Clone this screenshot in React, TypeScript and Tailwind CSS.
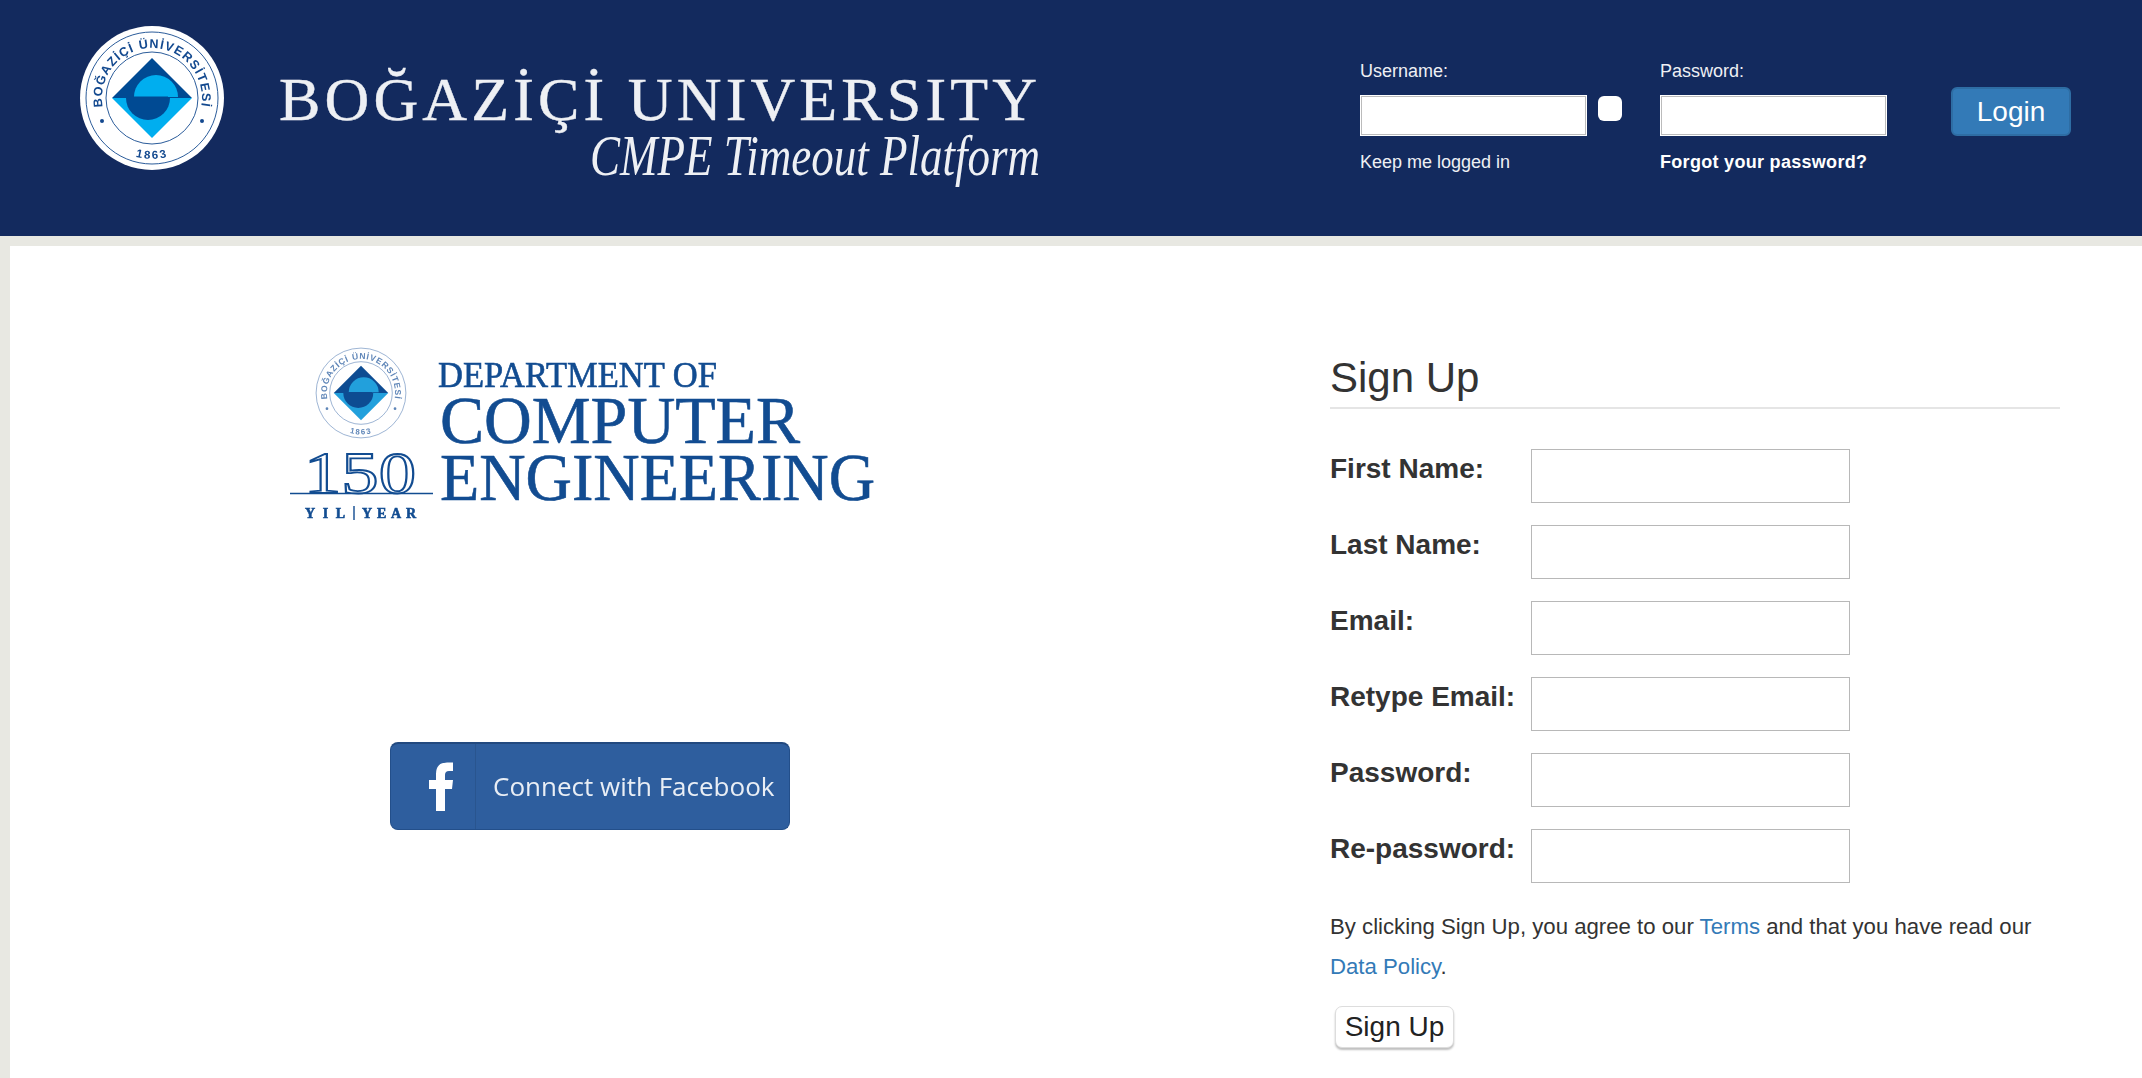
import React from 'react';

const SANS = 'font-["Liberation_Sans",Arial,sans-serif]';

const Seal: React.FC<{ id: string; size: number; ink: string; dark: string; light: string }> = ({ id, size, ink, dark, light }) => (
    <svg width={size} height={size} viewBox="-72 -72 144 144" className="shrink-0 blur-[0.4px]">
        <circle r="72" fill="#fff" />
        <circle r="66" fill="none" stroke={ink} strokeWidth="0.9" />
        <circle r="46" fill="none" stroke={ink} strokeWidth="0.9" />
        <path id={`${id}-top`} d="M -48.9 10.4 A 50 50 0 1 1 48.9 10.4" fill="none" />
        <path id={`${id}-bottom`} d="M -61 0 A 61 61 0 0 0 61 0" fill="none" />
        <text fontFamily="'Liberation Sans', sans-serif" fontWeight="700" fontSize="12.5" fill={ink} letterSpacing="1.1">
            <textPath href={`#${id}-top`} startOffset="50%" textAnchor="middle">BOĞAZİÇİ ÜNİVERSİTESİ</textPath>
        </text>
        <text fontFamily="'Liberation Sans', sans-serif" fontWeight="700" fontSize="11.5" fill={ink} letterSpacing="2">
            <textPath href={`#${id}-bottom`} startOffset="50%" textAnchor="middle">1863</textPath>
        </text>
        <circle cx="-50" cy="23" r="2" fill={ink} />
        <circle cx="50" cy="23" r="2" fill={ink} />
        <path d="M -40 0 L 0 -40 L 40 0 Z" fill={dark} />
        <path d="M -40 0 L 0 40 L 40 0 Z" fill={light} />
        <path d="M -18 -1 A 22 22 0 0 1 26 -1 Z" fill={light} />
        <path d="M -26 0 A 22 22 0 0 0 18 0 Z" fill={dark} />
        <path d="M -18 -1.5 H 16 V 0 H -18 Z" fill={dark} />
    </svg>
);

const HeaderLogo = () => (
    <div className="flex items-start shrink-0 w-[960px] mt-[26px] h-[170px]">
        <Seal id="head" size={144} ink="#13498f" dark="#004a93" light="#00aeef" />
        <svg width="816" height="170" viewBox="0 0 816 170" className="blur-[0.3px]">
            <text x="55" y="94" fontFamily="'Liberation Serif', serif" fontSize="62" fill="#eef0f4" stroke="#eef0f4" strokeWidth="0.4" textLength="758" lengthAdjust="spacing">BOĞAZİÇİ UNIVERSITY</text>
            <text x="366" y="149" fontFamily="'Liberation Serif', serif" fontStyle="italic" fontSize="56" fill="#eef0f4" textLength="450" lengthAdjust="spacingAndGlyphs">CMPE Timeout Platform</text>
        </svg>
    </div>
);

const DepartmentLogo = () => (
    <div className="relative w-[590px] h-[174px] blur-[0.4px]">
        <div className="absolute left-[22px] -top-[2px]">
            <Seal id="dept" size={98} ink="#5f86b8" dark="#0d4c92" light="#22a0dc" />
        </div>
        <svg width="590" height="174" viewBox="0 0 590 174" className="absolute inset-0">
            <g fontFamily="'Liberation Serif', serif" fill="#124c91" stroke="#124c91" strokeWidth="0.6">
                <text x="148" y="41" fontSize="35" textLength="279" lengthAdjust="spacingAndGlyphs">DEPARTMENT OF</text>
                <text x="150" y="97" fontSize="68" textLength="360" lengthAdjust="spacingAndGlyphs">COMPUTER</text>
                <text x="150" y="154" fontSize="68" textLength="435" lengthAdjust="spacingAndGlyphs">ENGINEERING</text>
                <text x="14" y="147" fontSize="60" fill="#fff" strokeWidth="1.8" textLength="112" lengthAdjust="spacingAndGlyphs">150</text>
                <text x="15" y="172" fontSize="14" fontWeight="700" textLength="40" lengthAdjust="spacing">YIL</text>
                <text x="72" y="172" fontSize="14" fontWeight="700" textLength="54" lengthAdjust="spacing">YEAR</text>
            </g>
            <path d="M0 147.5H143M64 160V174" stroke="#124c91" strokeWidth="1.4" fill="none" />
        </svg>
    </div>
);

const FacebookButton = () => (
    <a className="flex items-stretch w-[400px] h-[88px] ml-[380px] mt-[222px] rounded-[8px] border border-[#234f8a] border-t-2 border-t-[#22497f] bg-[#2e5e9e] blur-[0.3px]">
        <span className="flex items-center justify-center w-[85px] border-r border-[#29558f]">
            <svg width="24" height="49" viewBox="0 0 24 49" className="ml-[16px]">
                <path d="M16 49V27h7l1-9h-8v-5q0-4 4-4h4V.5h-6Q7 .5 7 12v6H0v9h7v22z" fill="#fff" />
            </svg>
        </span>
        <span className='flex-1 flex items-center pl-[17px] font-["Open_Sans",sans-serif] text-[26px] text-[#e9eef5]'>Connect with Facebook</span>
    </a>
);

const LoginForm = () => (
    <form className="flex items-start mt-[61px] ml-[320px] text-white text-[18px] leading-[20px]">
        <div className="w-[300px]">
            <label className="block text-[#eef0f4]">Username:</label>
            <div className="flex items-start gap-[11px] mt-[14px]">
                <input className="w-[227px] h-[41px] bg-white border border-white shadow-[inset_0_0_0_1px_#bbb]" />
                <span className="w-[24px] h-[25px] mt-[1px] rounded-[6px] bg-white" />
            </div>
            <div className="mt-[16px] text-[#eef0f4]">Keep me logged in</div>
        </div>
        <div className="w-[227px]">
            <label className="block text-[#eef0f4]">Password:</label>
            <input type="password" className="block w-[227px] h-[41px] mt-[14px] bg-white border border-white shadow-[inset_0_0_0_1px_#bbb]" />
            <a className="block mt-[16px] font-bold tracking-[0.3px]">Forgot your password?</a>
        </div>
        <button type="button" className="w-[120px] h-[49px] ml-[64px] mt-[26px] rounded-[6px] bg-[#337ab7] border-2 border-[#2e6da4] text-[28px] leading-none text-white">Login</button>
    </form>
);

const fields = ['First Name:', 'Last Name:', 'Email:', 'Retype Email:', 'Password:', 'Re-password:'];

const SignUpForm = () => (
    <section className="w-[730px] pt-[108px] text-[#333]">
        <h3 className="text-[42px] leading-[48px] border-b-2 border-[#e5e5e5] h-[55px]">Sign Up</h3>
        <form className="mt-[40px]">
            <div className="flex flex-col gap-[22px]">
                {fields.map((label) => (
                    <div key={label} className="flex items-start h-[54px]">
                        <label className="w-[201px] text-[28px] leading-[40px] font-bold">{label}</label>
                        <input className="w-[319px] h-[54px] bg-white border border-[#b8b8b8]" />
                    </div>
                ))}
            </div>
            <p className="mt-[24px] text-[22.2px] leading-[40px]">
                By clicking Sign Up, you agree to our <a className="text-[#337ab7]">Terms</a> and that you have read our <a className="text-[#337ab7]">Data Policy</a>.
            </p>
            <button type="button" className="block w-[119px] h-[42px] mt-[19px] ml-[5px] rounded-[7px] bg-white border border-[#ddd] shadow-[0_2px_2px_rgba(0,0,0,0.25)] text-[28px] leading-none text-[#222]">Sign Up</button>
        </form>
    </section>
);

export default function App() {
    return (
        <div className={`${SANS} h-[1078px] overflow-hidden bg-[#e8e8e2] flex flex-col`}>
            <header className="flex items-start h-[236px] bg-[#132a5e] pl-[80px]">
                <HeaderLogo />
                <LoginForm />
            </header>
            <main className="flex flex-1 mt-[10px] ml-[10px] bg-white">
                <div className="w-[1320px] shrink-0 pt-[100px] pl-[280px]">
                    <DepartmentLogo />
                    <div className="-ml-[280px]">
                        <FacebookButton />
                    </div>
                </div>
                <SignUpForm />
            </main>
        </div>
    );
}
